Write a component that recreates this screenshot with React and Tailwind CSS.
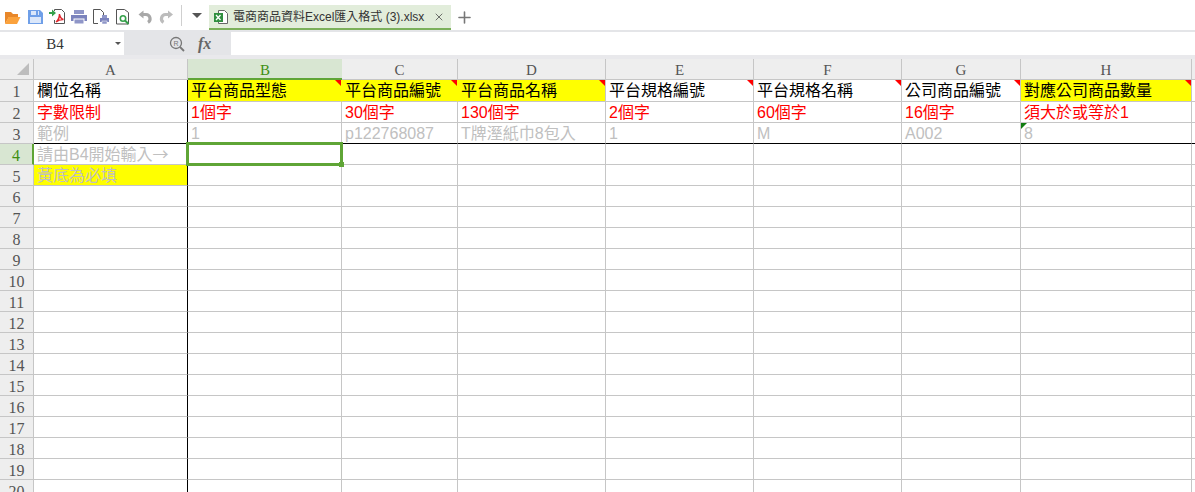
import React from "react";
import { Plus, X } from "lucide-react";

const CELL_FONT = "font-['Liberation_Sans','Noto_Sans_CJK_TC',sans-serif]";
const HEAD_FONT = "font-['Liberation_Serif','Noto_Sans_CJK_TC',serif]";

const columns = ["A", "B", "C", "D", "E", "F", "G", "H"];

// [text, yellow fill, has comment mark]
const headerRow = [
  ["欄位名稱", false, false],
  ["平台商品型態", true, true],
  ["平台商品編號", true, true],
  ["平台商品名稱", true, true],
  ["平台規格編號", false, true],
  ["平台規格名稱", false, true],
  ["公司商品編號", false, true],
  ["對應公司商品數量", true, true],
];
const limitRow = ["字數限制", "1個字", "30個字", "130個字", "2個字", "60個字", "16個字", "須大於或等於1"];
const sampleRow = ["範例", "1", "p122768087", "T牌溼紙巾8包入", "1", "M", "A002", "8"];

function Cell({ text, color = "text-black", yellow, comment, greenMark, selected, col, row, nextYellow }) {
  const rightBorder = col === 0 ? "border-r-black" : yellow && nextYellow ? "border-r-[#ffff00]" : "border-r-[#c6c6c6]";
  const bottomBorder = row === 3 ? "border-b-black" : "border-b-[#c6c6c6]";
  return (
    <div
      className={`relative h-full min-w-0 overflow-visible whitespace-nowrap border-r border-b pl-[3px] text-[16px] leading-[22px] ${color} ${rightBorder} ${bottomBorder} ${yellow ? "bg-[#ffff00]" : "bg-white"}`}
    >
      {text}
      {comment && <span className="absolute right-0 top-0 h-0 w-0 border-l-[6px] border-t-[6px] border-l-transparent border-t-[#ff0000]" />}
      {greenMark && <span className="absolute left-0 top-0 h-0 w-0 border-r-[6px] border-t-[6px] border-r-transparent border-t-[#107c10]" />}
      {selected && (
        <span className="absolute -left-[2px] -top-[2px] bottom-[-2px] right-[-2px] z-10 border-[3px] border-[#5fa536]">
          <span className="absolute -bottom-[4px] -right-[4px] h-[5px] w-[5px] bg-[#5fa536]" />
        </span>
      )}
    </div>
  );
}

function ToolbarIcons() {
  return (
    <svg width="181" height="30" viewBox="0 0 181 30" className="shrink-0">
      {/* open */}
      <path d="M5 12h6l2 2h5v3H9l-4 7z" fill="#e8872a" />
      <path d="M8.500 17H20.500l-3.500 7H5z" fill="#fba23c" />
      {/* save */}
      <path d="M28 10h12l3 3v11H28z" fill="#6f9fe8" />
      <rect x="31" y="11" width="8" height="4" fill="#dbe7fa" />
      <rect x="36" y="11" width="2" height="4" fill="#6f9fe8" />
      <rect x="30" y="17" width="11" height="6" fill="#dbe7fa" />
      {/* pdf export */}
      <path d="M54.500 11V9.500h7l3 3v11h-10V20" fill="#fff" stroke="#555" />
      <path d="M49 12h3V9.500l4 3.500-4 3.500V14h-3z" fill="#35a04a" />
      <path d="M56 22c2-1.500 3.500-4.500 3.500-8 .500 3.500 1.500 5 4 5.500-3-.200-5.500.800-7.500 2.500z" fill="none" stroke="#e0262c" strokeWidth="1.500" />
      {/* print */}
      <rect x="74" y="10" width="10" height="4" fill="#8f96c8" />
      <rect x="71" y="15" width="16" height="6" fill="#7b83bd" />
      <rect x="74" y="19" width="10" height="5" fill="#8f96c8" stroke="#fff" />
      {/* print preview */}
      <path d="M93.500 9.500h7l3 3v3M98 23.500h-4.500v-14" fill="none" stroke="#555" />
      <rect x="100" y="18" width="9" height="4" fill="#7b83bd" />
      <rect x="102" y="15" width="5" height="3" fill="#8f96c8" />
      <rect x="102" y="21" width="5" height="3" fill="#8f96c8" stroke="#fff" strokeWidth="0.500" />
      {/* preview */}
      <path d="M116.500 9.500h8l4 3v11.500h-12z" fill="#fff" stroke="#555" />
      <circle cx="123" cy="18.500" r="2.700" fill="none" stroke="#35a04a" strokeWidth="1.600" />
      <path d="M125 20.500l3.500 3.500" stroke="#35a04a" strokeWidth="2" />
      {/* undo */}
      <path d="M142 14.500h4a4.200 4.200 0 0 1 2 7.800" fill="none" stroke="#a8a8a8" strokeWidth="3.200" />
      <path d="M138.500 14.500l5-4v8z" fill="#a8a8a8" />
      {/* redo */}
      <path d="M169 14.500h-3.500a4.200 4.200 0 0 0-2 7.800" fill="none" stroke="#bcbcbc" strokeWidth="3.200" />
      <path d="M173 14.500l-5-4v8z" fill="#bcbcbc" />
    </svg>
  );
}

function Toolbar() {
  return (
    <div className="flex h-[30px] items-end bg-white">
      <div className="flex h-[30px] w-[209px] shrink-0 items-center">
        <ToolbarIcons />
        <div className="h-[21px] w-px bg-[#cfcfcf]" />
        <span className="ml-[10px] h-0 w-0 border-x-[5px] border-t-[5px] border-x-transparent border-t-[#555]" />
      </div>
      <div className="flex h-[25px] w-[242px] items-center border-b-2 border-[#7bb05a] bg-[#e2eddb] pl-[4px] pr-[6px]">
        <svg width="16" height="16" viewBox="0 0 16 16" className="shrink-0">
          <path d="M5.500 1.500h6l3 3v10h-9z" fill="#fff" stroke="#666" />
          <rect x="1" y="4" width="9" height="9" fill="#2f8f3f" />
          <path d="M3 6l4.500 5M7.500 6L3 11" stroke="#fff" strokeWidth="1.300" />
        </svg>
        <span className={`ml-[4px] whitespace-nowrap text-[12px] text-[#333] ${CELL_FONT}`}>電商商品資料Excel匯入格式 (3).xlsx</span>
        <X size={12} strokeWidth={1.500} className="ml-auto text-[#444]" />
      </div>
      <div className="flex h-[25px] w-[26px] items-center justify-center">
        <Plus size={19} strokeWidth={2} className="text-[#777]" />
      </div>
    </div>
  );
}

function FormulaBar() {
  return (
    <div className="flex h-[25px] bg-[#e4e5e8] pt-[2px]">
      <div className="relative flex h-[23px] w-[124px] items-center justify-center bg-white pr-[14px]">
        <span className={`pt-[2px] text-[15px] text-[#333] ${HEAD_FONT}`}>B4</span>
        <span className="absolute right-[3px] top-[10px] h-0 w-0 border-x-[3px] border-t-[3px] border-x-transparent border-t-[#555]" />
      </div>
      <div className="flex w-[107px] shrink-0 items-center pl-[45px]">
        <svg width="16" height="16" viewBox="0 0 16 16" className="shrink-0">
          <circle cx="7" cy="7" r="5.500" fill="none" stroke="#777" strokeWidth="1.300" />
          <path d="M11 11l4 4" stroke="#777" strokeWidth="1.800" />
          <text x="4.500" y="9.500" fontSize="7" fill="#777" fontFamily="Liberation Sans">R</text>
        </svg>
        <span className="ml-[13px] font-['Liberation_Serif',serif] text-[16px] font-bold italic text-[#666]">fx</span>
      </div>
      <div className="h-[23px] flex-1 bg-white" />
    </div>
  );
}

function Sheet() {
  const rows = Array.from({ length: 20 }, (_, i) => i + 1);

  const rowCells = (r) => {
    if (r === 1) return headerRow.map(([text, yellow, comment]) => ({ text, yellow, comment }));
    if (r === 2) return limitRow.map((text) => ({ text, color: "text-[#ff0000]" }));
    if (r === 3) return sampleRow.map((text, i) => ({ text, color: "text-[#c0c0c0]", greenMark: i === 7 }));
    if (r === 4)
      return columns.map((_, i) => ({
        text: i === 0 ? (
          <>
            請由B4開始輸入<span className="font-['Noto_Sans_CJK_TC',sans-serif] leading-none">→</span>
          </>
        ) : (
          ""
        ),
        color: "text-[#c0c0c0]",
        selected: i === 1,
      }));
    if (r === 5) return columns.map((_, i) => ({ text: i === 0 ? "黃底為必填" : "", color: "text-[#c0c0c0]", yellow: i === 0 }));
    return columns.map(() => ({ text: "" }));
  };

  return (
    <div className={`grid grid-cols-[34px_154px_154px_116px_148px_148px_148px_119px_171px_3px] grid-rows-[21px_22px] auto-rows-[21px] bg-[#e9e9ec] pt-[4px] ${CELL_FONT}`}>
      {/* corner */}
      <div className="relative h-full border-r border-b border-[#c6c6c6] bg-[#eeeeee]">
        <span className="absolute bottom-[4px] right-[4px] h-0 w-0 border-b-[12px] border-l-[12px] border-b-[#bdbdbd] border-l-transparent" />
      </div>
      {columns.map((c) => (
        <div
          key={c}
          className={`flex h-full items-center justify-center pt-[3px] text-[15px] ${HEAD_FONT} ${
            c === "B"
              ? "border-b-2 border-b-[#5fa536] bg-[#d8e6d2] text-[#3f8f12]"
              : "border-r border-b border-[#c6c6c6] bg-[#eeeeee] text-[#555]"
          }`}
        >
          {c}
        </div>
      ))}
      <div className="h-full border-b border-[#c6c6c6] bg-[#eeeeee]" />

      {rows.map((r) => {
        const cells = rowCells(r);
        return (
          <React.Fragment key={r}>
            <div
              className={`flex h-full items-center justify-center pt-[3px] text-[16px] ${HEAD_FONT} ${
                r === 4
                  ? "border-r-2 border-r-[#5fa536] border-b border-b-[#c6c6c6] bg-[#d8e6d2] text-[#3f8f12]"
                  : "border-r border-b border-[#c6c6c6] bg-[#eeeeee] text-[#555]"
              }`}
            >
              {r}
            </div>
            {cells.map((cell, i) => (
              <Cell key={i} {...cell} col={i} row={r} nextYellow={cells[i + 1]?.yellow} />
            ))}
            <div className={`h-full border-b bg-white ${r === 3 ? "border-b-black" : "border-b-[#c6c6c6]"}`} />
          </React.Fragment>
        );
      })}
    </div>
  );
}

export default function App() {
  return (
    <div className="h-[492px] w-[1195px] overflow-hidden bg-white">
      <Toolbar />
      <FormulaBar />
      <Sheet />
    </div>
  );
}
